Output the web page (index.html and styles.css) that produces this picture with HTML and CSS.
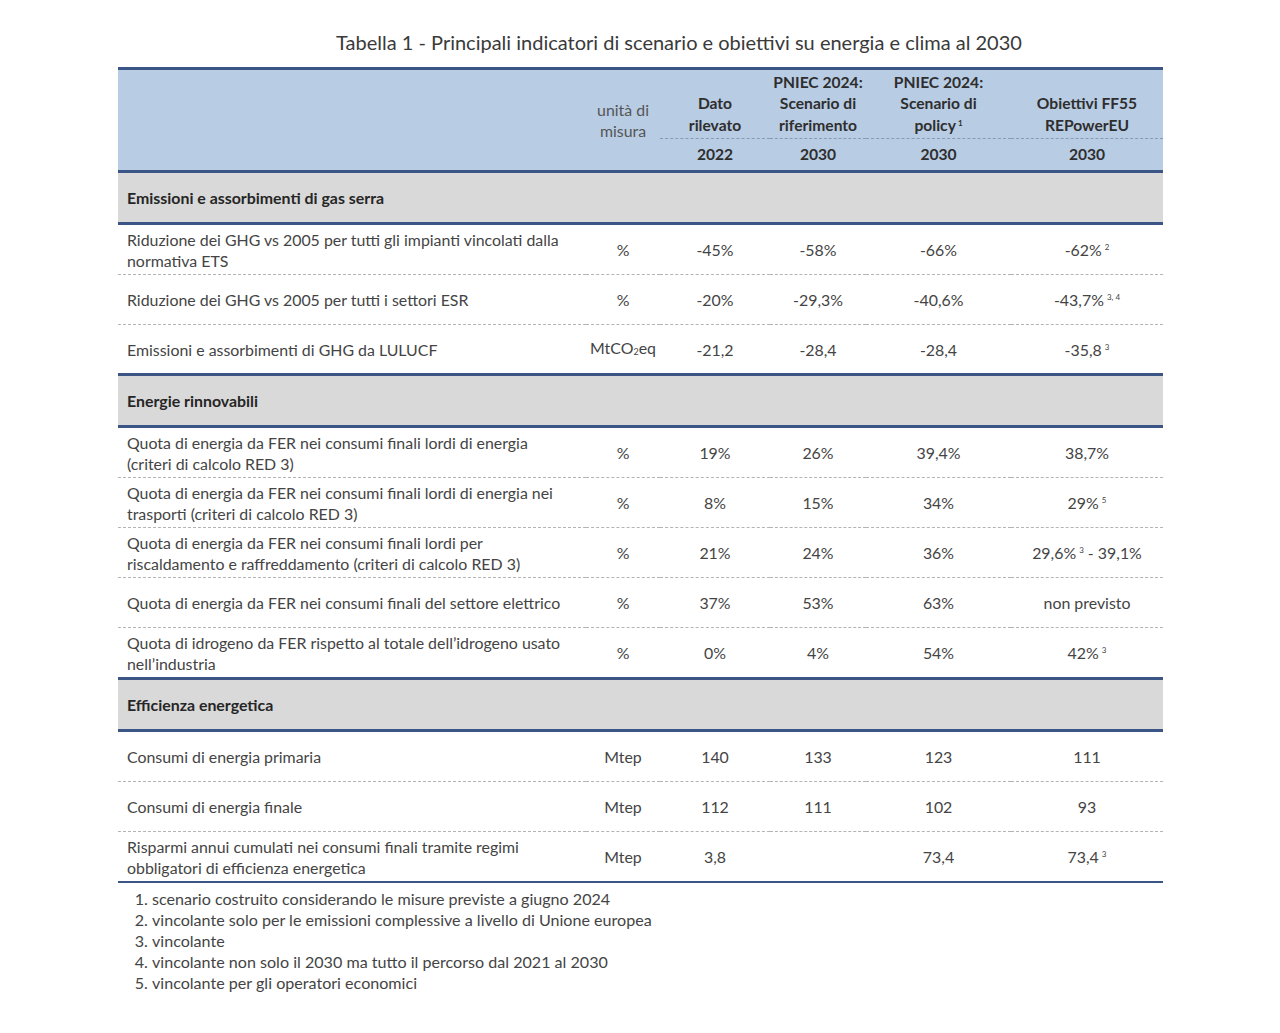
FILE: index.html
```html
<!DOCTYPE html>
<html lang="it">
<head>
<meta charset="utf-8">
<title>Tabella 1</title>
<link rel="stylesheet" href="styles.css">
</head>
<body>
<div class="page">
  <div class="title">Tabella 1 - Principali indicatori di scenario e obiettivi su energia e clima al 2030</div>
  <table class="tbl">
    <colgroup>
      <col class="c-label">
      <col class="c-unit">
      <col class="c-dato">
      <col class="c-ref">
      <col class="c-pol">
      <col class="c-ff">
    </colgroup>
    <thead>
      <tr class="h1">
        <th rowspan="2"></th>
        <th rowspan="2" class="unit-h">unità di<br>misura</th>
        <th class="dash">Dato<br>rilevato</th>
        <th class="dash">PNIEC 2024:<br>Scenario di<br>riferimento</th>
        <th class="dash">PNIEC 2024:<br>Scenario di<br>policy<sup>1</sup></th>
        <th class="dash">Obiettivi FF55<br>REPowerEU</th>
      </tr>
      <tr class="h2">
        <th>2022</th>
        <th>2030</th>
        <th>2030</th>
        <th>2030</th>
      </tr>
    </thead>
    <tbody>
      <tr class="sec"><td colspan="6">Emissioni e assorbimenti di gas serra</td></tr>
      <tr class="row">
        <td class="lbl">Riduzione dei GHG vs 2005 per tutti gli impianti vincolati dalla<br>normativa ETS</td>
        <td>%</td><td>-45%</td><td>-58%</td><td>-66%</td><td>-62%<sup>2</sup></td>
      </tr>
      <tr class="row">
        <td class="lbl">Riduzione dei GHG vs 2005 per tutti i settori ESR</td>
        <td>%</td><td>-20%</td><td>-29,3%</td><td>-40,6%</td><td>-43,7%<sup>3, 4</sup></td>
      </tr>
      <tr class="row last tight">
        <td class="lbl">Emissioni e assorbimenti di GHG da LULUCF</td>
        <td>MtCO<sub>2</sub>eq</td><td>-21,2</td><td>-28,4</td><td>-28,4</td><td>-35,8<sup>3</sup></td>
      </tr>
      <tr class="sec"><td colspan="6">Energie rinnovabili</td></tr>
      <tr class="row">
        <td class="lbl">Quota di energia da FER nei consumi finali lordi di energia<br>(criteri di calcolo RED 3)</td>
        <td>%</td><td>19%</td><td>26%</td><td>39,4%</td><td>38,7%</td>
      </tr>
      <tr class="row">
        <td class="lbl">Quota di energia da FER nei consumi finali lordi di energia nei<br>trasporti (criteri di calcolo RED 3)</td>
        <td>%</td><td>8%</td><td>15%</td><td>34%</td><td>29%<sup>5</sup></td>
      </tr>
      <tr class="row">
        <td class="lbl">Quota di energia da FER nei consumi finali lordi per<br>riscaldamento e raffreddamento (criteri di calcolo RED 3)</td>
        <td>%</td><td>21%</td><td>24%</td><td>36%</td><td>29,6%<sup>3</sup> - 39,1%</td>
      </tr>
      <tr class="row">
        <td class="lbl">Quota di energia da FER nei consumi finali del settore elettrico</td>
        <td>%</td><td>37%</td><td>53%</td><td>63%</td><td>non previsto</td>
      </tr>
      <tr class="row last">
        <td class="lbl">Quota di idrogeno da FER rispetto al totale dell’idrogeno usato<br>nell’industria</td>
        <td>%</td><td>0%</td><td>4%</td><td>54%</td><td>42%<sup>3</sup></td>
      </tr>
      <tr class="sec"><td colspan="6">Efficienza energetica</td></tr>
      <tr class="row">
        <td class="lbl">Consumi di energia primaria</td>
        <td>Mtep</td><td>140</td><td>133</td><td>123</td><td>111</td>
      </tr>
      <tr class="row">
        <td class="lbl">Consumi di energia finale</td>
        <td>Mtep</td><td>112</td><td>111</td><td>102</td><td>93</td>
      </tr>
      <tr class="row last end">
        <td class="lbl">Risparmi annui cumulati nei consumi finali tramite regimi<br>obbligatori di efficienza energetica</td>
        <td>Mtep</td><td>3,8</td><td></td><td>73,4</td><td>73,4<sup>3</sup></td>
      </tr>
    </tbody>
  </table>
  <ol class="notes">
    <li>scenario costruito considerando le misure previste a giugno 2024</li>
    <li>vincolante solo per le emissioni complessive a livello di Unione europea</li>
    <li>vincolante</li>
    <li>vincolante non solo il 2030 ma tutto il percorso dal 2021 al 2030</li>
    <li>vincolante per gli operatori economici</li>
  </ol>
</div>
</body>
</html>
```

FILE: styles.css
```css
html, body {
  margin: 0;
  padding: 0;
  background: #ffffff;
}
body {
  font-family: Lato, "Open Sans", "Liberation Sans", sans-serif;
  color: #444444;
}
.page {
  width: 1045px;
  margin-left: 118px;
  padding-top: 29px;
}
.title {
  text-align: center;
  padding-left: 77px;
  font-size: 20px;
  line-height: 26px;
  color: #3a3a3a;
  height: 38px;
}
.tbl {
  width: 1045px;
  border-collapse: collapse;
  table-layout: fixed;
  font-size: 15.9px;
}
.c-label { width: 468px; }
.c-unit { width: 74px; }
.c-dato { width: 110px; }
.c-ref { width: 96px; }
.c-pol { width: 145px; }
.c-ff { width: 152px; }

.tbl thead th {
  background: #b8cce4;
  color: #2e2e2e;
  font-weight: 700;
  text-align: center;
  padding: 0;
  line-height: 21.5px;
  font-size: 15.6px;
}
.tbl thead tr.h1 th {
  border-top: 3px solid #3b5587;
  height: 66px;
  vertical-align: bottom;
  padding-bottom: 2px;
}
.tbl thead tr.h1 th.unit-h {
  font-weight: 400;
  color: #555555;
  vertical-align: middle;
  padding-bottom: 0;
  padding-top: 0;
  font-size: 15.9px;
}
.tbl thead tr.h1 th.dash {
  border-bottom: 1px dashed #8a9ab0;
}
.tbl thead tr.h2 th {
  height: 31px;
  border-bottom: 3px solid #3b5587;
  vertical-align: middle;
}
.tbl sup {
  font-size: 8px;
  vertical-align: top;
  position: relative;
  top: -2px;
  margin-left: 3px;
  font-weight: 400;
}
.tbl thead sup {
  font-weight: 700;
  margin-left: 2px;
}
.tbl sub {
  font-size: 9px;
  vertical-align: baseline;
  position: relative;
  top: 1px;
}
.sec td {
  background: #d9d9d9;
  color: #262626;
  font-weight: 700;
  height: 49px;
  padding: 0 0 0 9px;
  border-top: 3px solid #3b5587;
  border-bottom: 3px solid #3b5587;
  vertical-align: middle;
}
.row td {
  height: 49px;
  padding: 0;
  text-align: center;
  vertical-align: middle;
  line-height: 21px;
  border-bottom: 1px dashed #b4b4b4;
}
.row.tight td {
  height: 48px;
}
.row.last td {
  border-bottom: none;
}
.row.end td {
  border-bottom: 2px solid #3b5587;
}
.row td.lbl {
  text-align: left;
  padding-left: 9px;
  padding-right: 4px;
  white-space: nowrap;
}
.notes {
  margin: 5px 0 0 0;
  padding-left: 34px;
  font-size: 16.1px;
  line-height: 21px;
  color: #444444;
}
```
